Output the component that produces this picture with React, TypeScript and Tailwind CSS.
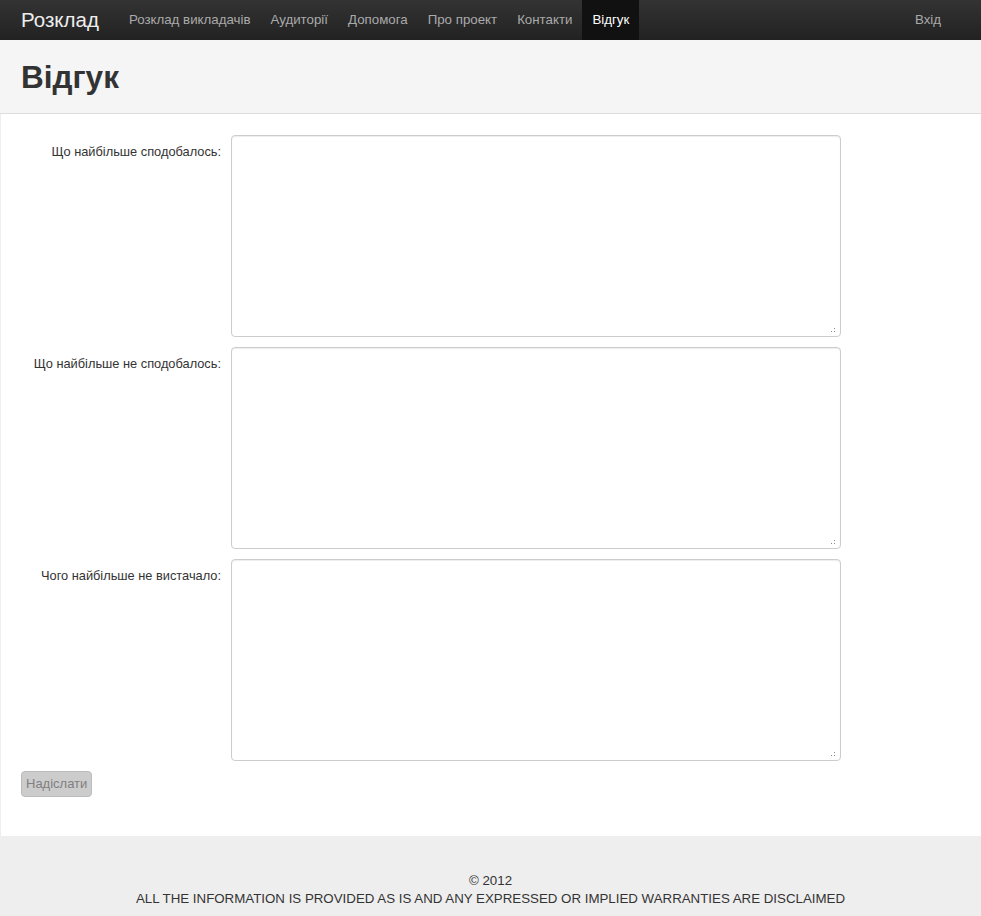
const navLinks = [
  { label: "Розклад викладачів" },
  { label: "Аудиторії" },
  { label: "Допомога" },
  { label: "Про проект" },
  { label: "Контакти" },
  { label: "Відгук", active: true },
];

const questions = [
  "Що найбільше сподобалось:",
  "Що найбільше не сподобалось:",
  "Чого найбільше не вистачало:",
];

function FeedbackField({ label }: { label: string }) {
  return (
    <div className="flex mb-[10px]">
      <label className="w-[230px] shrink-0 pr-[10px] pt-[8px] text-right text-[12.8px] leading-[18px] text-[#333]">
        {label}
      </label>
      <div className="relative">
        <textarea className="block h-[202px] w-[610px] resize-none rounded-[4px] border border-[#ccc] bg-white px-[6px] py-[4px] text-[13px] shadow-[inset_0_1px_1px_rgba(0,0,0,0.075)] outline-none" />
        {/* resize grip */}
        <svg className="absolute bottom-[4px] right-[5px]" width="6" height="6" viewBox="0 0 6 6">
          <rect x="4" y="1" width="1" height="1" fill="#888" />
          <rect x="1" y="4" width="1" height="1" fill="#888" />
          <rect x="4" y="4" width="1" height="1" fill="#888" />
        </svg>
      </div>
    </div>
  );
}

export default function App() {
  return (
    <div className="min-h-screen bg-white font-['Liberation_Sans',Arial,sans-serif]">
      <nav className="flex h-10 items-center bg-gradient-to-b from-[#333] to-[#222] shadow-[0_1px_3px_rgba(0,0,0,0.25)]">
        <a className="pl-[21px] pr-[20px] text-[20.5px] leading-10 text-[#eee]">Розклад</a>
        <ul className="flex h-10">
          {navLinks.map((link) => (
            <li key={link.label}>
              <a
                className={
                  link.active
                    ? "block h-10 bg-[#111] px-[10px] text-[13.3px] leading-10 text-white"
                    : "block h-10 px-[10px] text-[13.3px] leading-10 text-[#aaa]"
                }
              >
                {link.label}
              </a>
            </li>
          ))}
        </ul>
        <a className="ml-auto pr-[40px] text-[13.3px] leading-10 text-[#aaa]">Вхід</a>
      </nav>

      <header className="h-[74px] border-b border-[#ddd] bg-[#f5f5f5] px-[21px]">
        <h1 className="pt-[17px] text-[31.5px] font-bold leading-[40px] text-[#333]">Відгук</h1>
      </header>

      <main className="border-l border-[#eee] pt-[21px] pb-[39px]">
        <form>
          {questions.map((q) => (
            <FeedbackField key={q} label={q} />
          ))}
          <div className="px-[20px]">
            <button
              type="button"
              disabled
              className="h-[26px] rounded-[4px] border border-[#bbb] bg-[#ccc] px-[4px] text-[13px] text-[#808080]"
            >
              Надіслати
            </button>
          </div>
        </form>
      </main>

      <footer className="h-[80px] bg-[#eee] pt-[36px] text-center text-[13.3px] leading-[18px] text-[#333]">
        <p>© 2012</p>
        <p>ALL THE INFORMATION IS PROVIDED AS IS AND ANY EXPRESSED OR IMPLIED WARRANTIES ARE DISCLAIMED</p>
      </footer>
    </div>
  );
}
